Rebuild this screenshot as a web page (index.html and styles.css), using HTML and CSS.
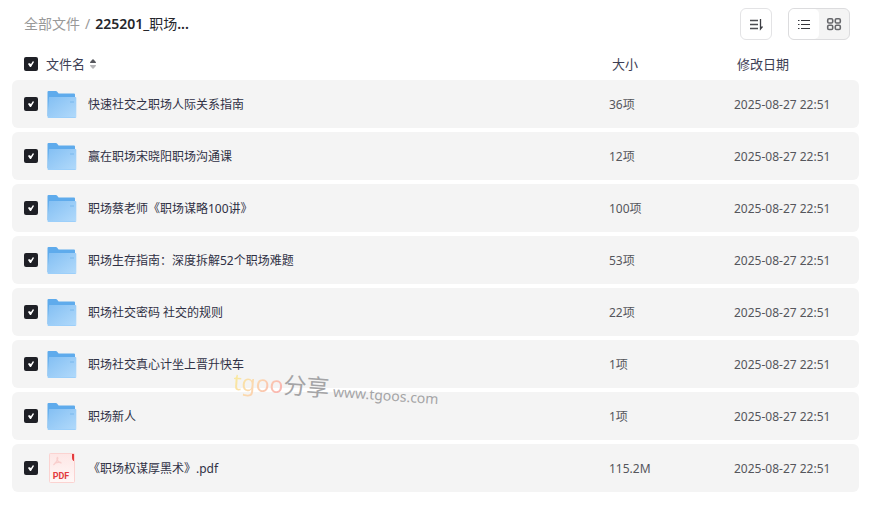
FILE: index.html
```html
<!DOCTYPE html>
<html lang="zh-CN">
<head>
<meta charset="utf-8">
<meta name="viewport" content="width=device-width, initial-scale=1">
<title>全部文件</title>
<link rel="stylesheet" href="styles.css">
</head>
<body>
<svg class="sprite" aria-hidden="true">
  <defs>
    <linearGradient id="folder-front" x1="0" y1="0" x2="1" y2="1">
      <stop offset="0" stop-color="#83bff3"/>
      <stop offset="1" stop-color="#b2dafb"/>
    </linearGradient>
    <linearGradient id="pdf-page" x1="0" y1="0" x2="0" y2="1">
      <stop offset="0" stop-color="#fde6e5"/>
      <stop offset="1" stop-color="#fff8f7"/>
    </linearGradient>
  </defs>
  <symbol id="folder" viewBox="0 0 32 32">
    <path d="M1.500 4Q1.500 3 2.500 3H10q.6 0 1 .6L12.600 5.500H28q1 0 1 1V28H1.500z" fill="#5fabec"/>
    <path d="M3 9H29.500q.8 0 .8 1V29q0 1-1 1H2.500q-1 0-1-1V28z" fill="url(#folder-front)"/>
    <path d="M2 29.500H29.500" stroke="#9ccffa" fill="none"/>
    <path d="M24 14h4" stroke="#86bff0" stroke-width="1.500"/>
  </symbol>
</svg>
<main class="files">
  <header class="toolbar">
    <nav class="crumbs" aria-label="路径">
      <a href="#">全部文件</a><span class="slash">/</span><span class="current"><b>225201_</b>职场<b>...</b></span>
    </nav>
    <div class="actions">
      <button class="sort" type="button" aria-label="排序">
        <svg width="16" height="16" viewBox="0 0 16 16"><path d="M2 4.500h8M2 8.500h8M2 12.500h8" stroke="#4c4d52" stroke-width="1.300"/><path d="M12.500 3v10l2-2.500" fill="none" stroke="#3c3d43" stroke-width="1.300"/></svg>
      </button>
      <div class="views">
        <button class="view active" type="button" aria-label="列表">
          <svg width="16" height="16" viewBox="0 0 16 16"><path d="M2 4.500h1.500M5 4.500h9M2 8.500h1.500M5 8.500h9M2 12.500h1.500M5 12.500h9" stroke="#35363c" stroke-width="1.200"/></svg>
        </button>
        <button class="view" type="button" aria-label="网格">
          <svg width="16" height="16" viewBox="0 0 16 16" fill="none" stroke="#66676b" stroke-width="1.600"><rect x="1.700" y="2.700" width="5" height="4.300" rx="1.300"/><rect x="9.300" y="2.700" width="5" height="4.300" rx="1.300"/><rect x="1.700" y="9.200" width="5" height="4.300" rx="1.300"/><rect x="9.300" y="9.200" width="5" height="4.300" rx="1.300"/></svg>
        </button>
      </div>
    </div>
  </header>
  <table class="list">
    <colgroup><col><col class="col-size"><col class="col-date"></colgroup>
    <thead>
      <tr>
        <th scope="col"><div class="name"><input type="checkbox" checked aria-label="全选"><span class="title">文件名</span><svg class="order" width="8" height="12" viewBox="0 0 8 12"><path d="M1 5Q1 4 2 3L4 1l2 2q1 1 1 2z" fill="#55565c"/><path d="M1 7h6q0 1-1 2l-2 2-2-2Q1 8 1 7z" fill="#b5b5b8"/></svg></div></th>
        <th scope="col">大小</th>
        <th scope="col">修改日期</th>
      </tr>
    </thead>
    <tbody>
      <tr><td><label class="name"><input type="checkbox" checked><svg class="icon"><use href="#folder"/></svg><span>快速社交之职场人际关系指南</span></label></td><td>36项</td><td>2025-08-27 22:51</td></tr>
      <tr><td><label class="name"><input type="checkbox" checked><svg class="icon"><use href="#folder"/></svg><span>赢在职场宋晓阳职场沟通课</span></label></td><td>12项</td><td>2025-08-27 22:51</td></tr>
      <tr><td><label class="name"><input type="checkbox" checked><svg class="icon"><use href="#folder"/></svg><span>职场蔡老师《职场谋略100讲》</span></label></td><td>100项</td><td>2025-08-27 22:51</td></tr>
      <tr><td><label class="name"><input type="checkbox" checked><svg class="icon"><use href="#folder"/></svg><span>职场生存指南：深度拆解52个职场难题</span></label></td><td>53项</td><td>2025-08-27 22:51</td></tr>
      <tr><td><label class="name"><input type="checkbox" checked><svg class="icon"><use href="#folder"/></svg><span>职场社交密码 社交的规则</span></label></td><td>22项</td><td>2025-08-27 22:51</td></tr>
      <tr><td><label class="name"><input type="checkbox" checked><svg class="icon"><use href="#folder"/></svg><span>职场社交真心计坐上晋升快车</span></label></td><td>1项</td><td>2025-08-27 22:51</td></tr>
      <tr><td><label class="name"><input type="checkbox" checked><svg class="icon"><use href="#folder"/></svg><span>职场新人</span></label></td><td>1项</td><td>2025-08-27 22:51</td></tr>
      <tr><td><label class="name"><input type="checkbox" checked><svg class="icon" viewBox="0 0 32 32"><rect x="3.500" y="1.500" width="25" height="29" rx="1" fill="url(#pdf-page)" stroke="#fbd3d1"/><path d="M26 2h2v7h-.5Q26 8 26 6z" fill="#e33b3e"/><path d="M11 5.500c2 0 0 4-3.500 7.500M11 5.500c-.5 3 2 5 4.500 5.500M8.500 11.300q3-1.500 6.500-.8" fill="none" stroke="#f9cfcd" stroke-width="1.300"/><text class="pdf-mark" x="15" y="27" text-anchor="middle">PDF</text></svg><span>《职场权谋厚黑术》.pdf</span></label></td><td>115.2M</td><td>2025-08-27 22:51</td></tr>
    </tbody>
  </table>
  <div class="watermark"><span class="brand">tgoo</span><span class="share">分享</span><span class="site">www.tgoos.com</span></div>
</main>
</body>
</html>
```
FILE: styles.css
```css
* {
  box-sizing: border-box;
}

body {
  margin: 0;
  background: #fff;
  color: #2f3044;
  font: 12px/20px "Noto Sans", "Noto Sans CJK SC", sans-serif;
}

.sprite {
  position: absolute;
  width: 0;
  height: 0;
}

.files {
  position: relative;
  padding: 0 15px 0 12px;
}

.toolbar {
  display: flex;
  justify-content: space-between;
  align-items: center;
  height: 48px;
  padding: 0 9px 0 12px;
}

.crumbs {
  font-size: 14px;
  color: #999;
}

.crumbs a {
  color: inherit;
  text-decoration: none;
}

.slash {
  margin: 0 5px;
}

.current {
  color: #25262b;
}

.current b {
  font-weight: 600;
}

.actions {
  display: flex;
  gap: 16px;
}

button {
  display: flex;
  align-items: center;
  justify-content: center;
  padding: 0;
  border: 0;
  background: none;
}

.sort {
  width: 32px;
  height: 32px;
  border: 1px solid #e3e3e5;
  border-radius: 6px;
  background: #fff;
}

.views {
  display: flex;
  height: 32px;
  border: 1px solid #dcdcde;
  border-radius: 6px;
  background: #f4f4f4;
  overflow: hidden;
}

.view {
  width: 30px;
}

.view.active {
  border-radius: 5px;
  background: #fff;
}

.list {
  width: 100%;
  margin-top: -4px;
  table-layout: fixed;
  border-collapse: separate;
  border-spacing: 0 4px;
}

.col-size {
  width: 125px;
}

.col-date {
  width: 137px;
}

th,
td {
  padding: 2px 12px 0;
  text-align: left;
}

th {
  height: 28px;
  padding-top: 4px;
  padding-left: 15px;
  color: #3d3e54;
  font-size: 13px;
  font-weight: 400;
}

th:first-child {
  padding-left: 12px;
}

td {
  height: 48px;
  background: #f4f4f4;
  color: #55565c;
}

td:first-child {
  padding-top: 0;
  border-radius: 6px 0 0 6px;
  color: #2f3044;
}

td:last-child {
  border-radius: 0 6px 6px 0;
}

.name {
  display: flex;
  align-items: center;
}

td .name span {
  padding-top: 2px;
}

.title {
  margin: 0 4px 0 8px;
}

input {
  appearance: none;
  flex: none;
  width: 14px;
  height: 14px;
  margin: 0;
  border-radius: 2px;
  background: #1f2026;
}

input:checked::before {
  content: "";
  display: block;
  width: 14px;
  height: 14px;
  background: #fff;
  clip-path: polygon(4px 7px, 5px 6px, 7px 7px, 9px 4px, 10px 5px, 7px 10px, 6px 10px);
}

.icon {
  flex: none;
  width: 32px;
  height: 32px;
  margin: 0 10px 0 8px;
}

.pdf-mark {
  font: 700 9px "Roboto", sans-serif;
  fill: #e33b3e;
}

.watermark {
  position: absolute;
  left: 233px;
  top: 372px;
  display: flex;
  align-items: baseline;
  color: #a4a4a6;
  font-size: 23px;
  line-height: 32px;
  white-space: nowrap;
  transform: rotate(4deg);
  pointer-events: none;
}

.brand {
  background: linear-gradient(120deg, #f9e8a0 15%, #fbd5b0 50%, #f9b4b0 90%);
  background-clip: text;
  color: transparent;
}

.site {
  margin-left: 4px;
  font-size: 14px;
}
```
